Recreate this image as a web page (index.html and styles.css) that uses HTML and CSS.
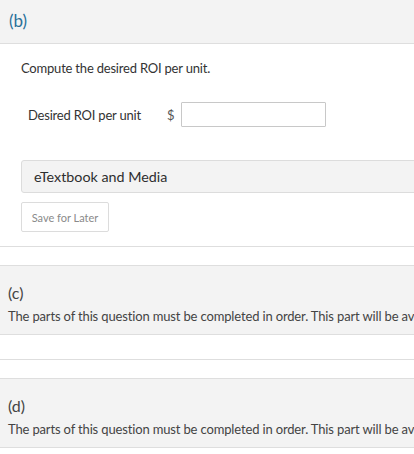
FILE: index.html
```html
<!DOCTYPE html>
<html>
<head>
<meta charset="utf-8">
<link rel="stylesheet" href="styles.css">
</head>
<body>
<div class="page">
  <section class="part part-b">
    <div class="part-head"><span class="part-label active">(b)</span></div>
    <div class="part-body">
      <p class="prompt">Compute the desired ROI per unit.</p>
      <div class="answer-row">
        <span class="answer-label">Desired ROI per unit</span>
        <span class="currency">$</span>
        <input class="answer-input" type="text">
      </div>
      <div class="media-box">eTextbook and Media</div>
      <button class="save-btn" type="button">Save for Later</button>
    </div>
  </section>

  <section class="part">
    <div class="part-head locked">
      <div class="part-label">(c)</div>
      <div class="locked-msg">The parts of this question must be completed in order. This part will be available when you complete the part above.</div>
    </div>
  </section>

  <section class="part">
    <div class="part-head locked">
      <div class="part-label">(d)</div>
      <div class="locked-msg">The parts of this question must be completed in order. This part will be available when you complete the part above.</div>
    </div>
  </section>
</div>
</body>
</html>
```
FILE: styles.css
```css
html, body {
  margin: 0;
  padding: 0;
  background: #fff;
  overflow: hidden;
}
body {
  font-family: Lato, "Open Sans", sans-serif;
  color: #333;
}
.page {
  width: 760px;
}
.part {
  border-bottom: 1px solid #dedede;
  margin-bottom: 18px;
}
.part-head {
  background: #f3f3f3;
  border-bottom: 1px solid #dedede;
  height: 44px;
  box-sizing: border-box;
  padding: 11px 9px 0;
}
.part-label {
  font-size: 17px;
  line-height: 20px;
  color: #444;
}
.part-label.active {
  color: #2a7099;
}
.part-body {
  padding: 16px 0 14px 21px;
}
.prompt {
  margin: 0;
  font-size: 13px;
  line-height: 16px;
  letter-spacing: -0.2px;
}
.answer-row {
  display: flex;
  align-items: center;
  margin-top: 26px;
  padding-left: 7px;
}
.answer-label {
  font-size: 13px;
  letter-spacing: -0.2px;
  width: 139px;
}
.currency {
  font-size: 13px;
  color: #555;
  width: 14px;
}
.answer-input {
  width: 145px;
  height: 25px;
  box-sizing: border-box;
  border: 1px solid #c8c8c8;
  border-radius: 1px;
  margin: 0;
  padding: 0 4px;
}
.media-box {
  margin-top: 33px;
  height: 33px;
  box-sizing: border-box;
  background: #f3f3f3;
  border: 1px solid #dcdcdc;
  border-radius: 3px;
  padding: 0 12px;
  font-size: 14.3px;
  line-height: 31px;
  color: #2e2e2e;
}
.save-btn {
  display: block;
  margin-top: 9px;
  width: 88px;
  height: 30px;
  background: #fff;
  border: 1px solid #dcdcdc;
  border-radius: 2px;
  font-family: Lato, sans-serif;
  font-size: 11px;
  color: #8a8a8a;
  padding: 0;
}
.part-head.locked {
  height: auto;
  border-top: 1px solid #dedede;
  padding: 17px 8px 9px;
  margin-bottom: 24px;
}
.locked .part-label {
  font-size: 16px;
  line-height: 20px;
}
.locked-msg {
  font-size: 13px;
  line-height: 18px;
  letter-spacing: -0.15px;
  color: #444;
  margin-top: 4px;
  white-space: nowrap;
}
```
